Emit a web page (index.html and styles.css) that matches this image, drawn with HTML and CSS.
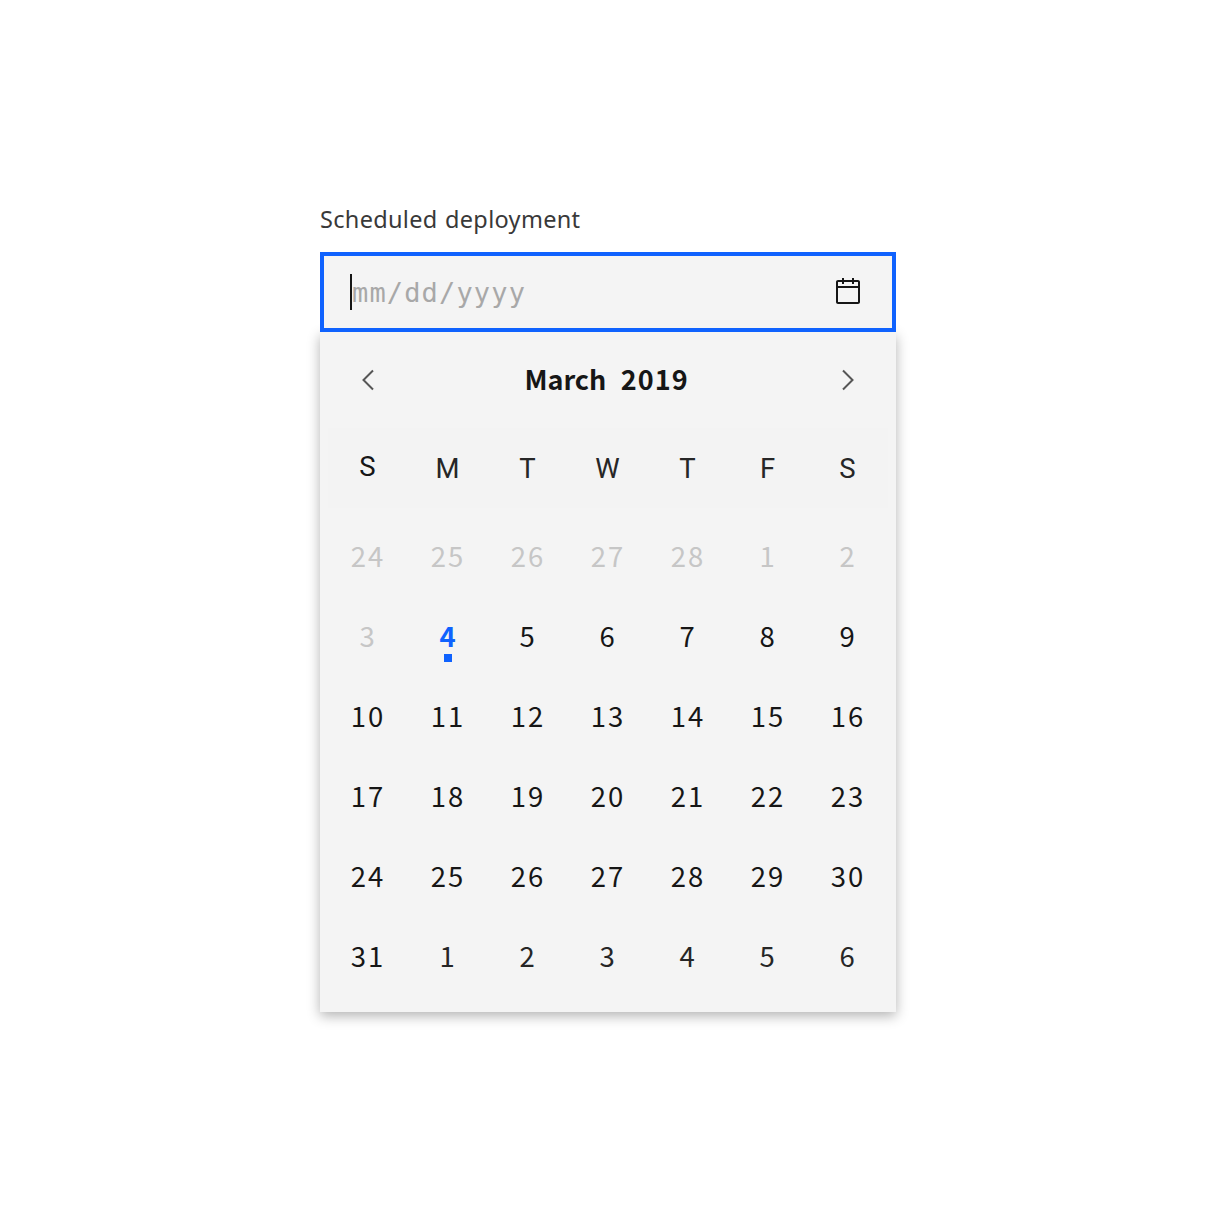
FILE: index.html
```html
<!DOCTYPE html>
<html lang="en">
<head>
<meta charset="utf-8">
<title>Scheduled deployment</title>
<link rel="stylesheet" href="styles.css">
</head>
<body>
<main class="picker">
  <div class="label">Scheduled deployment</div>
  <div class="field">
    <div class="entry"><span class="placeholder">mm/dd/yyyy</span></div>
    <svg class="icon" width="32" height="32" viewBox="0 0 32 32"><path d="M26 4h-4V2h-2v2h-8V2h-2v2H6c-1.100 0-2 .9-2 2v20c0 1.100.9 2 2 2h20c1.100 0 2-.9 2-2V6c0-1.100-.9-2-2-2zm0 22H6V12h20v14zm0-16H6V6h4v2h2V6h8v2h2V6h4v4z"/></svg>
  </div>
  <section class="calendar">
    <header class="month-bar">
      <svg class="chevron" width="32" height="32" viewBox="0 0 32 32"><path d="M21 6.500 11.500 16 21 25.500"/></svg>
      <div class="month"><span class="name">March</span><span class="year">2019</span></div>
      <svg class="chevron" width="32" height="32" viewBox="0 0 32 32"><path d="M11 6.500 20.500 16 11 25.500"/></svg>
    </header>
    <div class="weekdays"><span class="first">S</span><span>M</span><span>T</span><span>W</span><span>T</span><span>F</span><span>S</span></div>
    <div class="days">
      <span class="off">24</span><span class="off">25</span><span class="off">26</span><span class="off">27</span><span class="off">28</span><span class="off">1</span><span class="off">2</span>
      <span class="off">3</span><span class="today">4</span><span>5</span><span>6</span><span>7</span><span>8</span><span>9</span>
      <span>10</span><span>11</span><span>12</span><span>13</span><span>14</span><span>15</span><span>16</span>
      <span>17</span><span>18</span><span>19</span><span>20</span><span>21</span><span>22</span><span>23</span>
      <span>24</span><span>25</span><span>26</span><span>27</span><span>28</span><span>29</span><span>30</span>
      <span>31</span><span class="next">1</span><span class="next">2</span><span class="next">3</span><span class="next">4</span><span class="next">5</span><span class="next">6</span>
    </div>
  </section>
</main>
</body>
</html>
```
FILE: styles.css
```css
* { box-sizing: border-box; }
body { margin: 0; min-height: 1216px; background: #fff; color: #161616; font-family: "Noto Sans", sans-serif; }
.picker { width: 576px; margin: 0 auto; padding-top: 203px; }
.label { height: 49px; font-size: 23.500px; line-height: 32px; letter-spacing: 0.320px; word-spacing: 1px; color: #393939; white-space: nowrap; }
.field { position: relative; z-index: 1; height: 80px; border: 4px solid #0f62fe; background: #f4f4f4; display: flex; align-items: center; justify-content: space-between; padding: 0 28px 0 26px; }
.entry { height: 36px; border-left: 2px solid #161616; display: flex; align-items: center; }
.placeholder { padding-top: 2px; font-family: "DejaVu Sans Mono", monospace; font-size: 27px; line-height: 36px; letter-spacing: 1.150px; color: #a8a8a8; }
.icon { fill: #161616; }
.calendar { height: 680px; background: #f4f4f4; box-shadow: 0 4px 12px rgba(0, 0, 0, 0.300); }
.month-bar { height: 96px; padding: 0 32px; display: flex; align-items: center; justify-content: space-between; }
.chevron { fill: none; stroke: #565656; stroke-width: 2; }
.month { display: flex; gap: 14.500px; margin: -2px 3px 0 0; font-family: "Noto Sans CJK JP", sans-serif; font-weight: 700; font-size: 27px; line-height: 36px; }
.name { letter-spacing: 0; }
.year { letter-spacing: 1px; }
.weekdays { height: 80px; margin: 0 8px; background: #f3f3f3; display: grid; grid-template-columns: repeat(7, 80px); align-items: center; text-align: center; font-family: Roboto, sans-serif; font-size: 27.500px; color: #262626; }
.weekdays span { padding-right: 1px; }
.first { color: #161616; position: relative; top: -2px; }
.days { padding: 7px 8px 0; display: grid; grid-template-columns: repeat(7, 80px); grid-auto-rows: 80px; text-align: center; line-height: 80px; font-family: "Noto Sans CJK JP", sans-serif; font-size: 27.500px; letter-spacing: 1.900px; }
.off { color: #c6c6c6; }
.next { color: #262626; }
.today { position: relative; color: #0f62fe; font-weight: 700; letter-spacing: 1px; }
.today::after { content: ""; position: absolute; left: 36px; top: 59px; width: 8px; height: 8px; background: #0f62fe; }
```
